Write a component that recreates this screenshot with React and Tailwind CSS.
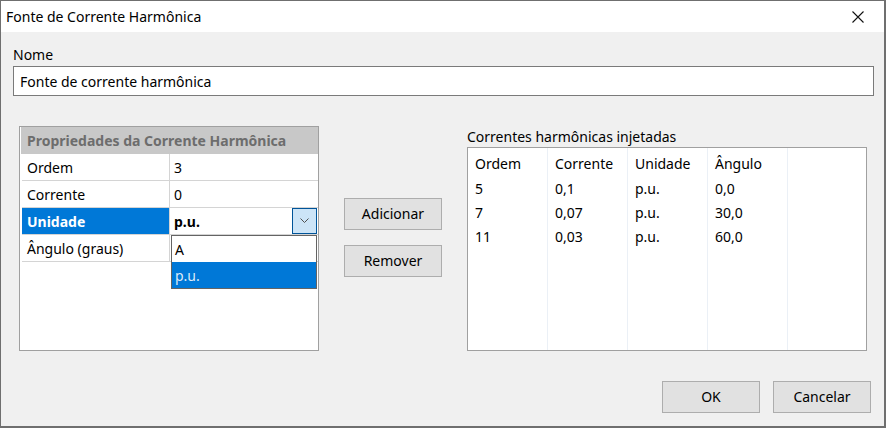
import { useState } from 'react';

const font = { fontFamily: '"Noto Sans", "Open Sans", sans-serif' };

// Linhas da grade de propriedades
const propriedades = [
  { nome: 'Ordem', valor: '3' },
  { nome: 'Corrente', valor: '0' },
  { nome: 'Unidade', valor: 'p.u.', selecionado: true },
  { nome: 'Ângulo (graus)', valor: '' },
];

// Correntes já injetadas
const correntes = [
  { ordem: '5', corrente: '0,1', unidade: 'p.u.', angulo: '0,0' },
  { ordem: '7', corrente: '0,07', unidade: 'p.u.', angulo: '30,0' },
  { ordem: '11', corrente: '0,03', unidade: 'p.u.', angulo: '60,0' },
];

const Botao = ({ children }) => (
  <button className="w-[98px] h-[32px] bg-[#e1e1e1] border border-[#adadad] text-[14px] text-black leading-none">
    {children}
  </button>
);

const GradePropriedades = () => {
  return (
    <div className="relative w-[300px] h-[225px] bg-white border border-[#a0a0a0] pl-px">
      <div className="h-[27px] bg-[#c8c8c8] flex items-center pl-[6px] text-[14px] font-bold text-[#6d6d6d]">
        Propriedades da Corrente Harmônica
      </div>
      {propriedades.map((p) => (
        <div key={p.nome} className="flex h-[27px] ml-px border-b border-[#d4d4d4] text-[14px]">
          <div
            className={`w-[148px] flex items-center pl-[5px] border-r border-[#d4d4d4] ${
              p.selecionado ? 'bg-[#0078d7] text-white font-bold' : 'text-black'
            }`}
          >
            {p.nome}
          </div>
          <div className={`flex-1 flex items-center pl-[4px] text-black ${p.selecionado ? 'font-bold' : ''}`}>
            {p.valor}
          </div>
          {p.selecionado && (
            <div className="w-[25px] h-[26px] mr-px bg-[#cce4f7] border border-[#005499] flex items-center justify-center">
              <svg width="9" height="6" viewBox="0 0 9 6" fill="none" stroke="#505050" strokeWidth="1">
                <path d="M0.5 0.5 L4.5 4.5 L8.5 0.5" />
              </svg>
            </div>
          )}
        </div>
      ))}
      {/* Lista aberta do combo */}
      <div className="absolute left-[151px] top-[108px] w-[146px] h-[54px] bg-white border border-[#646464] text-[14px]">
        <div className="h-[26px] flex items-center pl-[3px] text-black">A</div>
        <div className="h-[26px] flex items-center pl-[3px] bg-[#0078d7] text-[#dbeaf7]">p.u.</div>
      </div>
    </div>
  );
};

const ListaCorrentes = () => {
  const colunas = ['Ordem', 'Corrente', 'Unidade', 'Ângulo'];
  return (
    <div className="relative w-[400px] h-[204px] bg-white border border-[#a0a0a0] text-[14px] text-black">
      <div className="absolute inset-0 flex pointer-events-none">
        {[0, 1, 2, 3].map((i) => (
          <div key={i} className="w-[80px] h-full border-r border-[#ebf0f6]" />
        ))}
      </div>
      <div className="relative flex h-[28px] pt-[2px] items-center">
        {colunas.map((c) => (
          <div key={c} className="w-[80px] pl-[7px]">{c}</div>
        ))}
      </div>
      {correntes.map((r) => (
        <div key={r.ordem} className="relative flex h-[24px] items-center">
          <div className="w-[80px] pl-[7px]">{r.ordem}</div>
          <div className="w-[80px] pl-[7px]">{r.corrente}</div>
          <div className="w-[80px] pl-[7px]">{r.unidade}</div>
          <div className="w-[80px] pl-[7px]">{r.angulo}</div>
        </div>
      ))}
    </div>
  );
};

export default function App() {
  const [nome, setNome] = useState('Fonte de corrente harmônica');

  return (
    <div className="w-[886px] h-[428px] bg-[#6f6f6f] pl-px pt-px" style={font}>
      <div className="w-[883px] h-[425px] flex flex-col bg-[#f0f0f0]">
        {/* Barra de título */}
        <div className="h-[31px] bg-white flex items-center justify-between pl-[5px] pr-[20px]">
          <span className="text-[14px] text-black">Fonte de Corrente Harmônica</span>
          <svg width="12" height="12" viewBox="0 0 12 12" stroke="#111" strokeWidth="1.1">
            <path d="M0.5 0.5 L11.5 11.5 M11.5 0.5 L0.5 11.5" />
          </svg>
        </div>

        <div className="flex-1 flex flex-col pl-[12px] pr-[10px] pt-[13px]">
          <label className="text-[14px] text-black h-[20px] leading-[20px]">Nome</label>
          <input
            value={nome}
            onChange={(e) => setNome(e.target.value)}
            className="mt-[1px] h-[30px] w-full bg-white border border-[#7a7a7a] px-[6px] text-[14px] text-black outline-none"
          />

          <div className="flex items-start mt-[30px] ml-[6px]">
            <GradePropriedades />

            <div className="flex flex-col gap-[15px] ml-[25px] mt-[72px]">
              <Botao>Adicionar</Botao>
              <Botao>Remover</Botao>
            </div>

            <div className="flex flex-col ml-[25px]">
              <div className="h-[21px] flex items-center text-[14px] text-black">Correntes harmônicas injetadas</div>
              <ListaCorrentes />
            </div>
          </div>

          <div className="flex justify-end gap-[13px] mt-[30px] pr-[3px]">
            <Botao>OK</Botao>
            <Botao>Cancelar</Botao>
          </div>
        </div>
      </div>
    </div>
  );
}
